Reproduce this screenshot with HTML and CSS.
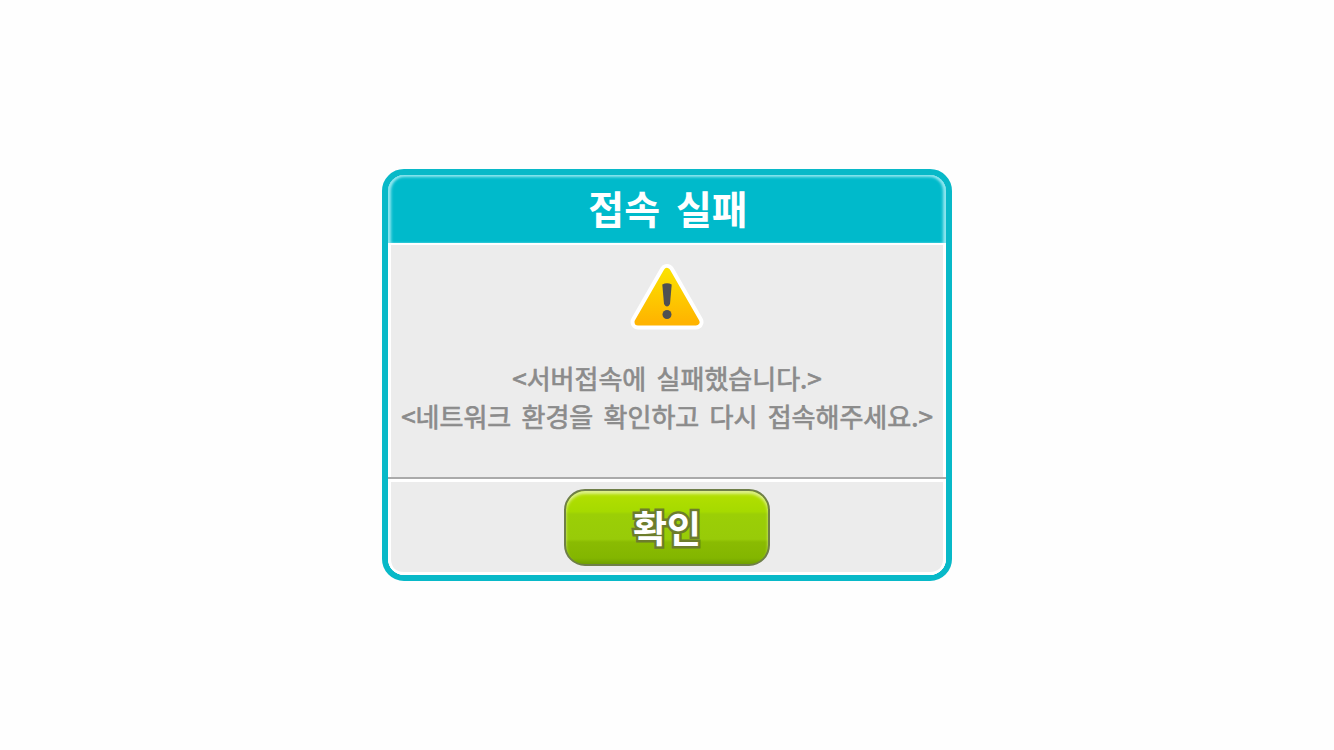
FILE: index.html
```html
<!DOCTYPE html>
<html lang="ko">
<head>
<meta charset="utf-8">
<title>접속 실패</title>
<link rel="stylesheet" href="styles.css">
</head>
<body>
<main class="dialog">
  <header class="dialog-header"><h1 class="title">접속 실패</h1></header>
  <section class="dialog-body">
    <svg class="warning" width="76" height="68" viewBox="0 0 76 68">
      <defs>
        <linearGradient id="amber" x1="0" y1="0" x2="0" y2="1">
          <stop offset="0" stop-color="#fbe000"/>
          <stop offset="1" stop-color="#ffb400"/>
        </linearGradient>
      </defs>
      <path d="M38 8.500L67 59H9Z" fill="#fff" stroke="#fff" stroke-width="15" stroke-linejoin="round"/>
      <path d="M38 8.500L67 59H9Z" fill="url(#amber)" stroke="url(#amber)" stroke-width="7" stroke-linejoin="round"/>
      <path d="M33.300 21.500Q38 19 42.700 21.500L41 41Q38 46 35 41Z" fill="#4f5052"/>
      <circle cx="38" cy="51.500" r="4.500" fill="#4f5052"/>
    </svg>
    <p class="message"><span class="line">&lt;서버접속에 실패했습니다.&gt;</span><span class="line">&lt;네트워크 환경을 확인하고 다시 접속해주세요.&gt;</span></p>
  </section>
  <footer class="dialog-footer"><button class="confirm"><span class="confirm-label">확인</span></button></footer>
</main>
</body>
</html>
```
FILE: styles.css
```css
* { box-sizing: border-box; }
body {
  margin: 0;
  height: 750px;
  display: flex;
  align-items: center;
  justify-content: center;
  background: #fefefe;
  font-family: "Noto Sans CJK KR", sans-serif;
}
.dialog {
  width: 570px;
  height: 412px;
  display: flex;
  flex-direction: column;
  border: 6px solid #08b9c8;
  border-radius: 22px;
  overflow: hidden;
  background: #fff;
}
.dialog-header {
  height: 68px;
  display: flex;
  align-items: flex-start;
  justify-content: center;
  padding: 2px 0 0 2px;
  background: #00bacb;
  border-radius: 16px 16px 0 0;
  box-shadow: inset 0 2px 3px #8fe6ef, inset 4px 0 3px -1px #8fe6ef, inset -4px 0 3px -1px #8fe6ef;
}
.title {
  margin: 0;
  color: #fff;
  font-size: 39px;
  font-weight: 700;
  line-height: 60px;
  word-spacing: 5px;
}
.dialog-body {
  height: 234px;
  margin: 0 3px;
  padding-top: 18px;
  border-top: 2px solid #fff;
  display: flex;
  flex-direction: column;
  align-items: center;
  background: #ececec;
}
.warning { display: block; }
.message {
  margin: 28px 0 0;
  color: #8b8b8b;
  font-size: 26px;
  font-weight: 400;
  line-height: 38px;
  text-align: center;
  white-space: nowrap;
  word-spacing: 3px;
  -webkit-text-stroke: 0.7px #8b8b8b;
}
.line { display: block; }
.dialog-footer {
  flex: 1;
  display: flex;
  justify-content: center;
  align-items: flex-start;
  padding-top: 10px;
  border-top: 2px solid #aaa;
  border-radius: 0 0 16px 16px;
  background: #ececec;
  box-shadow: inset 0 3px #fff, inset 3px 0 #fff, inset -3px 0 #fff, inset 0 -3px #fff;
}
.confirm {
  width: 206px;
  height: 77px;
  padding: 0;
  border: 2px solid #6f7f48;
  border-radius: 21px;
  background: linear-gradient(#b4e000 0%, #a6da00 28%, #9bcf06 32%, #98cb08 66%, #8abb02 70%, #83b600 92%, #6fa000 100%);
  box-shadow: inset 0 3px 3px #ddf08a;
  font-family: inherit;
}
.confirm-label {
  display: block;
  color: #fff;
  font-size: 37px;
  font-weight: 700;
  line-height: 73px;
  -webkit-text-stroke: 5px #6d7d2c;
  paint-order: stroke fill;
}
```
